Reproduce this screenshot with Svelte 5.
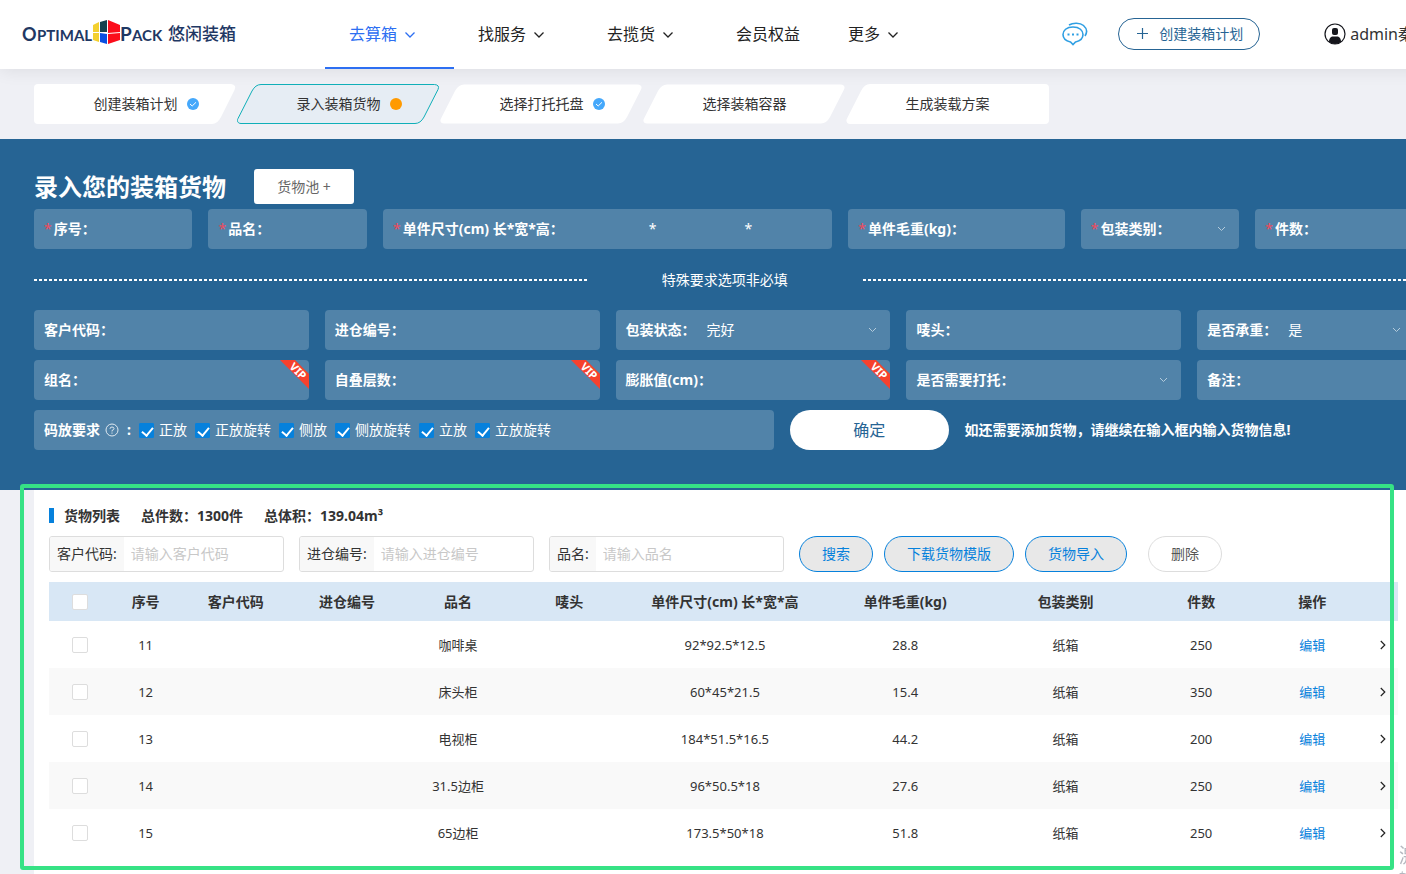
<script>
  const navItems = [
    { label: "去算箱", arrow: true, active: true },
    { label: "找服务", arrow: true },
    { label: "去揽货", arrow: true },
    { label: "会员权益", arrow: false },
    { label: "更多", arrow: true },
  ];

  const steps = [
    { label: "创建装箱计划", status: "done" },
    { label: "录入装箱货物", status: "current" },
    { label: "选择打托托盘", status: "done" },
    { label: "选择装箱容器", status: "" },
    { label: "生成装载方案", status: "" },
  ];

  // first, middle and last step have different outlines
  const firstShape = "M4 0H197Q203 1 200.500 6L187 33Q183.500 40 178 40H4Q0 40 0 36V4Q0 0 4 0Z";
  const middleShape = "M4 39.500C1 39.500 -.5 37 1 34.500L15 7Q18.500 .5 24 .5H197.500Q203 1 201 5.500L187 33Q183.500 39.500 178 39.500Z";
  const lastShape = "M4 40C1 40 -.5 37 1 34.500L15 7Q18.500 0 24 0H199Q203 0 203 4V36Q203 40 199 40Z";

  function stepShape(i) {
    if (i === 0) return firstShape;
    if (i === steps.length - 1) return lastShape;
    return middleShape;
  }

  const requiredFields = [
    { id: "no", label: "序号：", size: "w12" },
    { id: "name", label: "品名：", size: "w12" },
    { id: "size", label: "单件尺寸(cm) 长*宽*高：", size: "w32", type: "size" },
    { id: "weight", label: "单件毛重(kg)：", size: "w16" },
    { id: "pack", label: "包装类别：", size: "w12", type: "select", value: "" },
    { id: "count", label: "件数：", size: "w16" },
  ];

  const optionalFields = [
    { id: "client", label: "客户代码：", size: "w20" },
    { id: "stock", label: "进仓编号：", size: "w20" },
    { id: "state", label: "包装状态：", size: "w20", type: "select", value: "完好" },
    { id: "mark", label: "唛头：", size: "w20" },
    { id: "bearing", label: "是否承重：", size: "w16", type: "select", value: "是" },
    { id: "group", label: "组名：", size: "w20", vip: true },
    { id: "layers", label: "自叠层数：", size: "w20", vip: true },
    { id: "expand", label: "膨胀值(cm)：", size: "w20", vip: true },
    { id: "pallet", label: "是否需要打托：", size: "w20", type: "select", value: "" },
    { id: "remark", label: "备注：", size: "w16" },
  ];

  let placements = ["正放", "正放旋转", "侧放", "侧放旋转", "立放", "立放旋转"].map((label) => ({
    label,
    checked: true,
  }));

  const filters = [
    { id: "f-client", label: "客户代码:", placeholder: "请输入客户代码" },
    { id: "f-stock", label: "进仓编号:", placeholder: "请输入进仓编号" },
    { id: "f-name", label: "品名:", placeholder: "请输入品名" },
  ];

  const columns = ["序号", "客户代码", "进仓编号", "品名", "唛头", "单件尺寸(cm) 长*宽*高", "单件毛重(kg)", "包装类别", "件数", "操作"];

  let rows = [
    { no: 11, name: "咖啡桌", size: "92*92.5*12.5", weight: "28.8", pack: "纸箱", count: 250, checked: false },
    { no: 12, name: "床头柜", size: "60*45*21.5", weight: "15.4", pack: "纸箱", count: 350, checked: false },
    { no: 13, name: "电视柜", size: "184*51.5*16.5", weight: "44.2", pack: "纸箱", count: 200, checked: false },
    { no: 14, name: "31.5边柜", size: "96*50.5*18", weight: "27.6", pack: "纸箱", count: 250, checked: false },
    { no: 15, name: "65边柜", size: "173.5*50*18", weight: "51.8", pack: "纸箱", count: 250, checked: false },
  ];

  function toggleAll(event) {
    rows = rows.map((row) => ({ ...row, checked: event.target.checked }));
  }
</script>

<div class="page">
  <header class="header">
    <a class="logo" href="#home" aria-label="Optimal Pack 悠闲装箱">
      <svg width="216" height="30" viewBox="0 0 216 30">
        <g class="logo-latin">
          <text x="0" y="21" font-size="18">O</text>
          <text x="15" y="21" font-size="15">PTIMAL</text>
          <text x="98" y="21" font-size="19">P</text>
          <text x="110" y="21" font-size="15">ACK</text>
        </g>
        <path d="M71 5L77 2V12H71Z" fill="#f3d02f" />
        <path d="M78 2L85 0V12H78Z" fill="#17424f" />
        <path d="M86 0L98 5V12L86 13Z" fill="#fb0d1b" />
        <path d="M71 13H77V22L71 20Z" fill="#f3d02f" />
        <path d="M78 13L85 14V24L78 22Z" fill="#0b4fe0" />
        <path d="M86 14L98 13V20L86 24Z" fill="#fb0d1b" />
        <text class="logo-cn" x="146" y="20" font-size="17">悠闲装箱</text>
      </svg>
    </a>

    <nav class="nav">
      {#each navItems as item}
        <a class="nav-item" class:active={item.active} href="#nav">
          {item.label}
          {#if item.arrow}
            <svg class="nav-arrow" width="10" height="6" viewBox="0 0 10 6">
              <path d="M.5 .5L5 5L9.500 .5" fill="none" stroke="currentColor" stroke-width="1.300" />
            </svg>
          {/if}
        </a>
      {/each}
    </nav>

    <div class="tools">
      <button class="chat-button" aria-label="消息">
        <svg width="26" height="24" viewBox="0 0 26 24" fill="none" stroke="#2f9fe3" stroke-width="1.600">
          <path d="M11 5C4.500 5 1 8.500 1 12.500C1 16.500 4.500 19 8.500 20L11 22.500L13.500 20C18 19 21 16.500 21 12.500C21 8.500 17.500 5 11 5Z" />
          <path d="M7 3C11 .5 18 .5 21.500 3.500C25.500 7 25 11 23 14" />
          <path d="M5.500 12.500H7.500M10 12.500H12M14.500 12.500H16.500" stroke-width="2" />
        </svg>
      </button>
      <button class="plan-button">
        <svg width="11" height="11" viewBox="0 0 11 11">
          <path d="M5.500 0V11M0 5.500H11" stroke="#266494" stroke-width="1.200" />
        </svg>
        创建装箱计划
      </button>
      <a class="user" href="#user">
        <svg width="22" height="22" viewBox="0 0 22 22">
          <circle cx="11" cy="11" r="10" fill="#fff" stroke="#15161c" stroke-width="1.200" />
          <rect x="8" y="5" width="6" height="7" rx="2" fill="#15161c" />
          <path d="M5 19C5 15 7 13.500 9 13.500H13C15 13.500 17 15 17 19Q11 23 5 19Z" fill="#15161c" />
        </svg>
        admin秦
      </a>
    </div>
  </header>

  <ol class="steps">
    {#each steps as step, i}
      <li class="step" class:current={step.status === "current"}>
        <svg class="step-shape" viewBox="0 0 203 40">
          <path d={stepShape(i)} />
        </svg>
        <span class="step-label">
          {step.label}
          {#if step.status === "done"}
            <svg class="step-icon" viewBox="0 0 12 12">
              <circle cx="6" cy="6" r="6" fill="#45a8fb" />
              <path d="M3 6L5.200 8L9 4.300" fill="none" stroke="#fff" />
            </svg>
          {:else if step.status === "current"}
            <svg class="step-icon" viewBox="0 0 12 12">
              <circle cx="6" cy="6" r="6" fill="#ff9a00" />
            </svg>
          {/if}
        </span>
      </li>
    {/each}
  </ol>

  <section class="entry">
    <div class="entry-head">
      <h1>录入您的装箱货物</h1>
      <button class="pool-button">货物池 +</button>
    </div>

    <div class="fields">
      {#each requiredFields as field}
        <div class="cell {field.size}">
          <div class="field">
            <label for={field.id}><span class="star">*</span>{field.label}</label>
            {#if field.type === "size"}
              <input class="side" id={field.id} type="text" />
              <span class="times">*</span>
              <input class="side" type="text" aria-label="宽" />
              <span class="times">*</span>
              <input type="text" aria-label="高" />
            {:else if field.type === "select"}
              <select id={field.id}><option>{field.value}</option></select>
              <svg class="select-arrow" width="9" height="6" viewBox="0 0 9 6">
                <path d="M1 1L4.500 4.500L8 1" />
              </svg>
            {:else}
              <input id={field.id} type="text" />
            {/if}
          </div>
        </div>
      {/each}
    </div>

    <div class="divider"><span>特殊要求选项非必填</span></div>

    <div class="fields">
      {#each optionalFields as field}
        <div class="cell {field.size}">
          <div class="field">
            <label for={field.id}>{field.label}</label>
            {#if field.type === "select"}
              <select id={field.id}><option>{field.value}</option></select>
              <svg class="select-arrow" width="9" height="6" viewBox="0 0 9 6">
                <path d="M1 1L4.500 4.500L8 1" />
              </svg>
            {:else}
              <input id={field.id} type="text" />
            {/if}
            {#if field.vip}
              <svg class="vip" width="29" height="29" viewBox="0 0 29 29">
                <path d="M0 0H15L29 14V29Z" fill="#f6412d" />
                <text x="18" y="15" transform="rotate(45 18 11)" text-anchor="middle">VIP</text>
              </svg>
            {/if}
          </div>
        </div>
      {/each}

      <div class="cell w52">
        <div class="field placement">
          <b>码放要求</b>
          <svg class="help" width="14" height="14" viewBox="0 0 14 14" fill="none" stroke="#dfe9f0">
            <circle cx="7" cy="7" r="6" />
            <path d="M5 5.800Q5 4 7 4Q9 4 9 5.700Q9 6.800 7 7.500V8.500M7 9.500V10.700" />
          </svg>
          <b class="colon">:</b>
          {#each placements as item}
            <label class="check-label">
              <input class="check" type="checkbox" bind:checked={item.checked} />
              {item.label}
            </label>
          {/each}
        </div>
      </div>
      <div class="cell w12">
        <button class="confirm-button">确定</button>
      </div>
      <p class="hint">如还需要添加货物，请继续在输入框内输入货物信息!</p>
    </div>
  </section>

  <section class="panel">
    <div class="summary">
      <h2>货物列表</h2>
      <span>总件数：1300件</span>
      <span>总体积：139.04m³</span>
    </div>

    <div class="filters">
      {#each filters as filter}
        <div class="filter">
          <label for={filter.id}>{filter.label}</label>
          <input id={filter.id} type="text" placeholder={filter.placeholder} />
        </div>
      {/each}
      <div class="actions">
        <button class="pill">搜索</button>
        <button class="pill">下载货物模版</button>
        <button class="pill">货物导入</button>
        <button class="pill plain">删除</button>
      </div>
    </div>

    <table>
      <colgroup>
        <col class="c-check" />
        <col class="c-no" />
        <col class="c-text" />
        <col class="c-text" />
        <col class="c-text" />
        <col class="c-text" />
        <col class="c-size" />
        <col class="c-wide" />
        <col class="c-wide" />
        <col class="c-text" />
        <col class="c-text" />
        <col class="c-more" />
      </colgroup>
      <thead>
        <tr>
          <th><input class="check box" type="checkbox" aria-label="全选" on:change={toggleAll} /></th>
          {#each columns as column}
            <th>{column}</th>
          {/each}
          <th></th>
        </tr>
      </thead>
      <tbody>
        {#each rows as row}
          <tr>
            <td><input class="check box" type="checkbox" aria-label="选择" bind:checked={row.checked} /></td>
            <td>{row.no}</td>
            <td></td>
            <td></td>
            <td>{row.name}</td>
            <td></td>
            <td>{row.size}</td>
            <td>{row.weight}</td>
            <td>{row.pack}</td>
            <td>{row.count}</td>
            <td><a href="#edit">编辑</a></td>
            <td>
              <svg width="6" height="10" viewBox="0 0 6 10">
                <path d="M.8 1L4.800 5L.8 9" fill="none" stroke="#222" stroke-width="1.200" />
              </svg>
            </td>
          </tr>
        {/each}
      </tbody>
    </table>
    <div class="highlight"></div>
  </section>

  <div class="notice">
    <div class="notice-title">激</div>
    <div>转</div>
  </div>
</div>

<style>
  :global(body) {
    margin: 0;
    overflow-x: hidden;
    background: #eff0f5;
  }

  .page {
    min-width: 1506px;
    font-family: "Noto Sans", "Noto Sans CJK SC", sans-serif;
    font-size: 14px;
    line-height: 20px;
    color: #333;
  }

  .page * {
    box-sizing: border-box;
  }

  button,
  input,
  select {
    font: inherit;
    color: inherit;
    padding: 0;
    border: none;
    background: none;
    outline: none;
  }

  button {
    cursor: pointer;
  }

  a {
    text-decoration: none;
    color: inherit;
  }

  svg {
    display: block;
    flex: none;
  }

  .header {
    position: relative;
    display: flex;
    align-items: center;
    height: 69px;
    padding: 0 92px 0 22px;
    background: #fff;
    box-shadow: 0 2px 16px rgba(0, 0, 0, 0.08);
  }

  .logo-latin {
    font-family: Lato, sans-serif;
    font-weight: 700;
    fill: #1f3864;
  }

  .logo-cn {
    font-weight: 500;
    fill: #1f3864;
  }

  .nav {
    display: flex;
    margin-left: 87px;
    font-size: 16px;
    color: #222;
  }

  .nav-item {
    display: flex;
    align-items: center;
    height: 69px;
    padding: 0 24px;
    border-bottom: 2px solid transparent;
  }

  .nav-item.active {
    color: #2d6ff2;
    border-color: #2d6ff2;
  }

  .nav-arrow {
    margin: 2px 15px 0 8px;
  }

  .tools {
    display: flex;
    align-items: center;
    margin-left: auto;
    padding-bottom: 2px;
  }

  .plan-button {
    display: flex;
    align-items: center;
    gap: 11px;
    height: 32px;
    margin: 0 64px 0 30px;
    padding: 0 16px 0 18px;
    border: 1px solid #266494;
    border-radius: 16px;
    color: #266494;
  }

  .user {
    display: flex;
    align-items: center;
    gap: 4px;
    font-size: 16px;
    white-space: nowrap;
  }

  .steps {
    display: flex;
    margin: 0;
    padding: 15px 34px;
    list-style: none;
  }

  .step {
    position: relative;
    display: flex;
    align-items: center;
    justify-content: center;
    width: 203px;
    height: 40px;
  }

  .step-shape {
    position: absolute;
    inset: 0;
    fill: #fff;
  }

  .current .step-shape {
    fill: #e6edf4;
    stroke: #10afb8;
  }

  .step-label {
    position: relative;
  }

  .step-icon {
    position: absolute;
    left: 100%;
    top: 4px;
    width: 12px;
    height: 12px;
    margin-left: 9px;
  }

  .entry {
    padding: 30px 18px 30px 34px;
    background: #266494;
    color: #fff;
  }

  .entry-head {
    display: flex;
    align-items: center;
    gap: 28px;
    margin-bottom: 5px;
  }

  h1 {
    margin: 0;
    font-size: 24px;
    line-height: 34px;
  }

  .pool-button {
    width: 100px;
    height: 35px;
    border-radius: 3px;
    background: #fff;
    color: #666;
  }

  .fields {
    display: flex;
    flex-wrap: wrap;
  }

  .cell {
    flex: none;
    padding: 0 16px 10px 0;
  }

  .w12 {
    width: 12%;
  }

  .w16 {
    width: 16%;
  }

  .w20 {
    width: 20%;
  }

  .w32 {
    width: 32%;
  }

  .w52 {
    width: 52%;
  }

  .field {
    position: relative;
    display: flex;
    align-items: center;
    height: 40px;
    padding: 0 10px;
    border-radius: 4px;
    background: rgba(255, 255, 255, 0.2);
    overflow: hidden;
  }

  .field > label {
    flex: none;
    font-weight: 700;
  }

  .star {
    margin-right: 2px;
    font-weight: 400;
    color: #f04a5c;
  }

  .field input[type="text"] {
    flex: 1;
    width: 0;
    min-width: 0;
    height: 100%;
  }

  .field input.side {
    flex: none;
    width: 82px;
  }

  .times {
    margin: 0 3px;
  }

  .field select {
    flex: 1;
    min-width: 0;
    height: 100%;
    padding-left: 11px;
    appearance: none;
  }

  .select-arrow {
    position: absolute;
    right: 13px;
    top: 17px;
    fill: none;
    stroke: #b4cbdb;
  }

  .vip {
    position: absolute;
    top: 0;
    right: 0;
  }

  .vip text {
    font-size: 11px;
    font-weight: 700;
    fill: #fff;
  }

  .divider {
    display: flex;
    align-items: center;
    width: 95%;
    height: 41px;
  }

  .divider::before,
  .divider::after {
    content: "";
    width: 40%;
    height: 2px;
    background: repeating-linear-gradient(90deg, #fff 0 3px, transparent 3px 5px);
  }

  .divider span {
    width: 20%;
    text-align: center;
  }

  .divider + .fields {
    margin-top: 10px;
  }

  .help {
    margin-left: 5px;
  }

  .colon {
    width: 20px;
    text-align: center;
  }

  .check-label {
    display: flex;
    align-items: center;
    gap: 5px;
    margin-right: 8px;
  }

  .field > .check-label {
    font-weight: 400;
  }

  .check {
    position: relative;
    flex: none;
    width: 15px;
    height: 15px;
    margin: 0;
    border: 1px solid #ddd;
    border-radius: 1px;
    background: #fff;
    appearance: none;
  }

  .check:checked {
    border-color: #0681dc;
    background: #0681dc;
  }

  .check:checked::after {
    content: "";
    position: absolute;
    left: 4px;
    top: 1px;
    width: 5px;
    height: 9px;
    border: solid #fff;
    border-width: 0 2px 2px 0;
    transform: rotate(40deg);
  }

  .check.box {
    width: 16px;
    height: 16px;
    border-radius: 2px;
  }

  .confirm-button {
    width: 100%;
    height: 40px;
    border-radius: 20px;
    background: #fff;
    color: #266494;
    font-size: 16px;
  }

  .hint {
    margin: 10px 0;
    font-weight: 700;
  }

  .panel {
    position: relative;
    margin: 0 93px 0 34px;
    padding: 15px 15px 18px;
    background: #fff;
  }

  .summary {
    display: flex;
    align-items: center;
    gap: 21px;
    height: 21px;
    margin-bottom: 10px;
    font-weight: 700;
  }

  h2 {
    margin: 0;
    padding-left: 10px;
    border-left: 5px solid #0681dc;
    font-size: 14px;
    line-height: 15px;
  }

  .filters {
    display: flex;
    gap: 15px;
    margin-bottom: 10px;
  }

  .filter {
    display: flex;
    width: 235px;
    height: 36px;
    border: 1px solid #ddd;
    border-radius: 3px;
    overflow: hidden;
  }

  .filter label {
    padding: 7px;
    background: #f8f8f8;
  }

  .filter input {
    flex: 1;
    min-width: 0;
    padding: 0 7px;
  }

  .filter input::placeholder {
    color: #c8c8c8;
    opacity: 1;
  }

  .actions {
    display: flex;
    gap: 11px;
  }

  .pill {
    height: 36px;
    padding: 0 22px;
    border: 1px solid #0681dc;
    border-radius: 18px;
    background: #e8e8e8;
    color: #0681dc;
  }

  .pill.plain {
    margin-left: 10px;
    border-color: #ddd;
    background: #fff;
    color: #555;
  }

  table {
    width: 100%;
    table-layout: fixed;
    border-collapse: collapse;
    text-align: center;
  }

  .c-check {
    width: 62px;
  }

  .c-no {
    width: 69px;
  }

  .c-text {
    width: 111px;
  }

  .c-size {
    width: 200px;
  }

  .c-wide {
    width: 160px;
  }

  .c-more {
    width: 30px;
  }

  th,
  td {
    padding: 0;
    vertical-align: middle;
  }

  th {
    height: 39px;
    padding-top: 1px;
    background: #d8e7f5;
  }

  td {
    height: 47px;
    font-size: 13px;
  }

  th .check,
  td .check {
    display: block;
    margin: 0 auto;
  }

  td svg {
    margin: 0 auto;
  }

  td a {
    color: #0681dc;
  }

  tbody tr:nth-child(even) {
    background: #f9f9f9;
  }

  .highlight {
    position: absolute;
    top: -6px;
    right: 19px;
    bottom: 4px;
    left: -14px;
    border: 4px solid #36e285;
    border-radius: 3px;
    pointer-events: none;
  }

  .notice {
    position: fixed;
    right: -13px;
    bottom: -14px;
    color: #b4b7bf;
    pointer-events: none;
  }

  .notice-title {
    font-size: 20px;
    line-height: 24px;
  }
</style>
